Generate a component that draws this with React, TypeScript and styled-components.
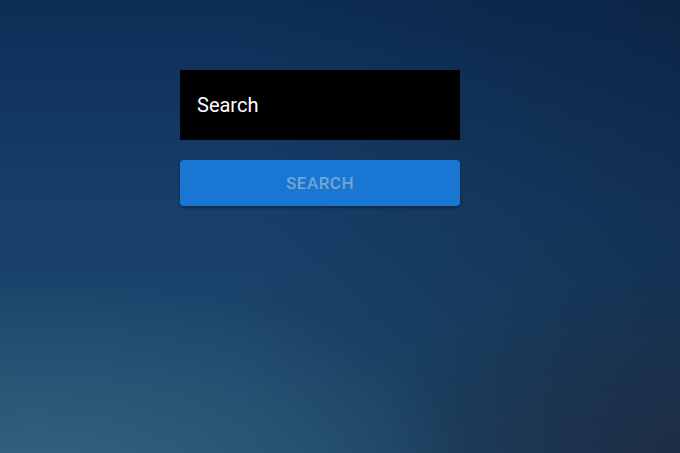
import React from "react";
import styled, { createGlobalStyle } from "styled-components";

const Global = createGlobalStyle`
  html, body { margin: 0; padding: 0; height: 100%; }
  body { font-family: Roboto, "Liberation Sans", sans-serif; }
  #root { height: 100%; }
`;

const Page = styled.div`
  width: 680px;
  height: 453px;
  box-sizing: border-box;
  padding: 70px 40px 0 0;
  display: flex;
  flex-direction: column;
  align-items: center;
  background:
    radial-gradient(ellipse 65% 45% at 5% 105%, rgba(62, 108, 135, 0.7) 0%, rgba(62, 108, 135, 0) 100%),
    radial-gradient(ellipse 45% 40% at 100% 100%, rgba(32, 42, 66, 0.8) 0%, rgba(32, 42, 66, 0) 100%),
    linear-gradient(to right, rgba(8, 22, 40, 0) 35%, rgba(8, 22, 40, 0.35) 100%),
    linear-gradient(to bottom, #0d2d56 0%, #173f6a 45%, #1f4a6b 100%);
`;

const Form = styled.div`
  width: 280px;
  display: flex;
  flex-direction: column;
  gap: 20px;
`;

const Input = styled.input`
  box-sizing: border-box;
  width: 100%;
  height: 70px;
  border: none;
  outline: none;
  background: #000;
  color: #fff;
  padding: 0 17px;
  font-family: Roboto, "Liberation Sans", sans-serif;
  font-size: 20px;
  &::placeholder { color: #fff; opacity: 1; }
`;

const Button = styled.button`
  height: 46px;
  width: 100%;
  border: none;
  border-radius: 4px;
  background: #1976d2;
  color: #72a5d2;
  font-family: Roboto, "Liberation Sans", sans-serif;
  font-weight: 500;
  font-size: 17px;
  letter-spacing: 0.5px;
  text-transform: uppercase;
  box-shadow: 0 2px 3px rgba(0, 0, 0, 0.3);
  cursor: default;
`;

export default function App() {
  return (
    <>
      <Global />
      <Page>
        <Form>
          <Input placeholder="Search" />
          <Button>Search</Button>
        </Form>
      </Page>
    </>
  );
}
